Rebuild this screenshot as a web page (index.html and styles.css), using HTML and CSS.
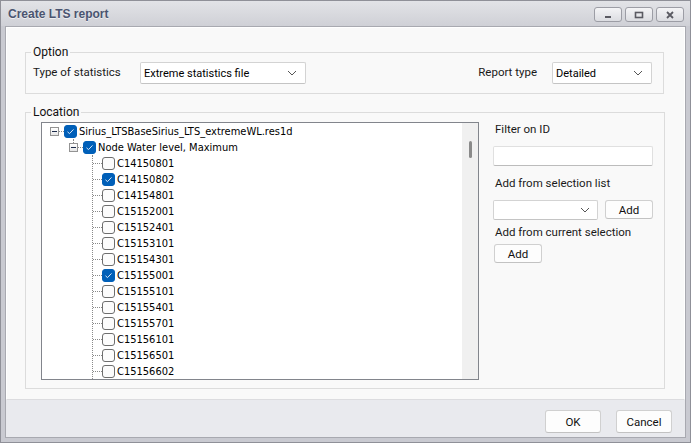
FILE: index.html
```html
<!DOCTYPE html>
<html lang="en">
<head>
  <meta charset="UTF-8">
  <title>Create LTS report</title>
  <link rel="stylesheet" href="styles.css">
</head>
<body>
  <div class="window">
    <div class="titlebar">
      <span class="title">Create LTS report</span>
      <div class="win-buttons">
        <span class="win-btn"><svg width="10" height="10" viewBox="0 0 10 10"><rect x="2" y="6" width="6" height="2" fill="#5a5a62"/></svg></span>
        <span class="win-btn"><svg width="10" height="10" viewBox="0 0 10 10"><rect x="1.5" y="2.5" width="7" height="5" fill="none" stroke="#5a5a62" stroke-width="1.6"/></svg></span>
        <span class="win-btn"><svg width="10" height="10" viewBox="0 0 10 10"><path d="M2 2 L8 8 M8 2 L2 8" stroke="#5a5a62" stroke-width="1.8"/></svg></span>
      </div>
    </div>

    <div class="client">
      <div class="main">
        <fieldset class="group option">
          <legend>Option</legend>
          <div class="option-row">
            <span class="label type-label">Type of statistics</span>
            <div class="select stat-select">
              <span>Extreme statistics file</span>
              <svg class="chev" width="10" height="6" viewBox="0 0 10 6"><path d="M1 1 L5 5 L9 1" fill="none" stroke="#555" stroke-width="1"/></svg>
            </div>
            <span class="spacer"></span>
            <span class="label report-label">Report type</span>
            <div class="select report-select">
              <span>Detailed</span>
              <svg class="chev" width="10" height="6" viewBox="0 0 10 6"><path d="M1 1 L5 5 L9 1" fill="none" stroke="#555" stroke-width="1"/></svg>
            </div>
          </div>
        </fieldset>

        <fieldset class="group location">
          <legend>Location</legend>
          <div class="location-body">
            <div class="tree">
              <div class="tree-list">
                <div class="row root">
                  <span class="expander"></span>
                  <span class="hline short"></span>
                  <span class="check on"></span>
                  <span class="text">Sirius_LTSBaseSirius_LTS_extremeWL.res1d</span>
                </div>
                <div class="row node">
                  <span class="expander up"></span>
                  <span class="hline short"></span>
                  <span class="check on"></span>
                  <span class="text">Node Water level, Maximum</span>
                </div>
                <div class="leaves" id="leaves"></div>
              </div>
              <div class="scrollbar"><span class="thumb"></span></div>
            </div>

            <div class="side">
              <div class="label side-label">Filter on ID</div>
              <div class="input"></div>
              <div class="label side-label">Add from selection list</div>
              <div class="side-row">
                <div class="select list-select">
                  <span></span>
                  <svg class="chev" width="10" height="6" viewBox="0 0 10 6"><path d="M1 1 L5 5 L9 1" fill="none" stroke="#555" stroke-width="1"/></svg>
                </div>
                <button class="btn small">Add</button>
              </div>
              <div class="label side-label">Add from current selection</div>
              <button class="btn small current">Add</button>
            </div>
          </div>
        </fieldset>
      </div>

      <div class="footer">
        <button class="btn dialog">OK</button>
        <button class="btn dialog">Cancel</button>
      </div>
    </div>
  </div>

  <script>
    const leaves = [
      ['C14150801', false], ['C14150802', true], ['C14154801', false],
      ['C15152001', false], ['C15152401', false], ['C15153101', false],
      ['C15154301', false], ['C15155001', true], ['C15155101', false],
      ['C15155401', false], ['C15155701', false], ['C15156101', false],
      ['C15156501', false], ['C15156602', false]
    ];
    const box = document.getElementById('leaves');
    leaves.forEach(function (item) {
      const row = document.createElement('div');
      row.className = 'row leaf';
      row.innerHTML = '<span class="hline"></span><span class="check' + (item[1] ? ' on' : '') +
        '"></span><span class="text">' + item[0] + '</span>';
      box.appendChild(row);
    });
  </script>
</body>
</html>
```

FILE: styles.css
```css
* {
  box-sizing: border-box;
}
body {
  margin: 0;
  font-family: Roboto, "Liberation Sans", Arial, sans-serif;
  font-size: 11.5px;
  color: #111;
}
.window {
  width: 691px;
  height: 443px;
  border: 1px solid #8f9098;
  background: #c9cad1;
  display: flex;
  flex-direction: column;
}
.titlebar {
  height: 25px;
  display: flex;
  align-items: center;
  padding: 0 6px 0 7px;
  background: linear-gradient(#e2e3e7, #cfd0d6);
}
.title {
  font-family: "Liberation Sans", Arial, sans-serif;
  font-weight: bold;
  font-size: 12px;
  color: #4a5470;
  text-shadow: 0 1px 0 rgba(255, 255, 255, 0.6);
  flex: 1;
}
.win-buttons {
  display: flex;
  gap: 3px;
  margin-top: 2px;
}
.win-btn {
  width: 28px;
  height: 15px;
  border: 1px solid #9c9da5;
  border-radius: 3px;
  background: linear-gradient(#f4f4f6, #dcdde2);
  display: flex;
  align-items: center;
  justify-content: center;
}
.client {
  flex: 1;
  margin: 0 4px 4px 4px;
  border: 1px solid #a8a9b0;
  background: #e9eaee;
  display: flex;
  flex-direction: column;
}
.main {
  height: 373px;
  background: #f9f9f9;
  border: 1px solid #ffffff;
  border-bottom-color: #dcdcdf;
  padding: 16px 20px 0 18px;
}
.group {
  margin: 0;
  border: 1px solid #dcdcdc;
  padding: 2px 11px 9px 15px;
}
.group legend {
  padding: 0 2px;
  margin-left: -10px;
  line-height: 16px;
  font-size: 12px;
  color: #111;
}
.option {
  padding-left: 7px;
}
.option legend {
  margin-left: -2px;
}
.option-row {
  display: flex;
  align-items: center;
  height: 22px;
}
.label {
  color: #1a1a1a;
}
.type-label {
  width: 107px;
  margin-top: -2px;
}
.spacer {
  flex: 1;
}
.report-label {
  margin-right: 15px;
  margin-top: -2px;
}
.select {
  height: 22px;
  background: #fff;
  border: 1px solid #d3d3d3;
  border-bottom-color: #c4c4c4;
  border-radius: 2px;
  display: flex;
  align-items: center;
  justify-content: space-between;
  padding: 0 8px 0 3px;
  font-size: 11px;
  color: #000;
}
.stat-select {
  width: 166px;
}
.report-select {
  width: 100px;
}
.chev {
  flex: none;
}
.location {
  margin-top: 10px;
  padding-bottom: 8px;
}
.location-body {
  display: flex;
  gap: 14px;
}
.tree {
  width: 438px;
  height: 258px;
  border: 1px solid #82858c;
  background: #fff;
  display: flex;
  overflow: hidden;
}
.tree-list {
  flex: 1;
  font-family: "DejaVu Sans Condensed", "DejaVu Sans", sans-serif;
  font-stretch: condensed;
  font-size: 11px;
}
.row {
  height: 16px;
  display: flex;
  align-items: center;
  white-space: nowrap;
}
.root {
  padding-left: 8px;
}
.node {
  padding-left: 27px;
}
.leaves {
  margin-left: 50px;
  border-left: 1px dotted #8a8a8a;
}
.expander {
  position: relative;
  width: 9px;
  height: 9px;
  border: 1px solid #939393;
  background: linear-gradient(#ffffff, #e6e6e6);
}
.expander::after {
  content: "";
  position: absolute;
  left: 1px;
  top: 3px;
  width: 5px;
  height: 1px;
  background: #1c2b4a;
}
.expander.up::before {
  content: "";
  position: absolute;
  left: 3px;
  top: -5px;
  height: 4px;
  border-left: 1px dotted #8a8a8a;
}
.hline {
  width: 9px;
  border-top: 1px dotted #8a8a8a;
}
.hline.short {
  width: 5px;
}
.check {
  width: 13px;
  height: 13px;
  border: 1px solid #6e6e6e;
  border-radius: 3px;
  background: #fcfcfc;
  flex: none;
}
.check.on {
  border-color: #005fb8;
  background: #005fb8 url("data:image/svg+xml,%3Csvg xmlns='http://www.w3.org/2000/svg' width='11' height='11' viewBox='0 0 11 11'%3E%3Cpath d='M2.5 5.8 L4.5 7.6 L8.5 3.4' fill='none' stroke='%23d8e6f6' stroke-width='1'/%3E%3C/svg%3E") center no-repeat;
}
.text {
  margin-left: 2px;
  color: #000;
}
.scrollbar {
  width: 16px;
  background: #f0f0f0;
  padding-top: 18px;
  display: flex;
  justify-content: center;
}
.thumb {
  width: 3px;
  height: 17px;
  background: #8a8a8a;
  border-radius: 2px;
}
.side {
  width: 160px;
  display: flex;
  flex-direction: column;
}
.side-label {
  line-height: 16px;
  padding-left: 2px;
  margin-top: -1px;
}
.input {
  height: 20px;
  margin: 9px 0 10px;
  background: #fff;
  border: 1px solid #e0e0e0;
  border-bottom-color: #bcbcbc;
  border-radius: 2px;
}
.side-row {
  display: flex;
  gap: 7px;
  margin: 9px 0 5px;
}
.list-select {
  width: 105px;
  height: 20px;
  padding-right: 7px;
}
.btn {
  font-family: Roboto, "Liberation Sans", Arial, sans-serif;
  font-size: 11.5px;
  color: #111;
  background: #fdfdfd;
  border: 1px solid #d0d0d0;
  border-bottom-color: #c2c2c2;
  border-radius: 3px;
  padding: 0;
}
.btn.small {
  width: 48px;
  height: 19px;
}
.btn.current {
  margin: 4px 0 0 1px;
}
.footer {
  flex: 1;
  display: flex;
  justify-content: flex-end;
  gap: 15px;
  padding: 10px 13px 0 0;
}
.btn.dialog {
  width: 56px;
  height: 23px;
}
```
